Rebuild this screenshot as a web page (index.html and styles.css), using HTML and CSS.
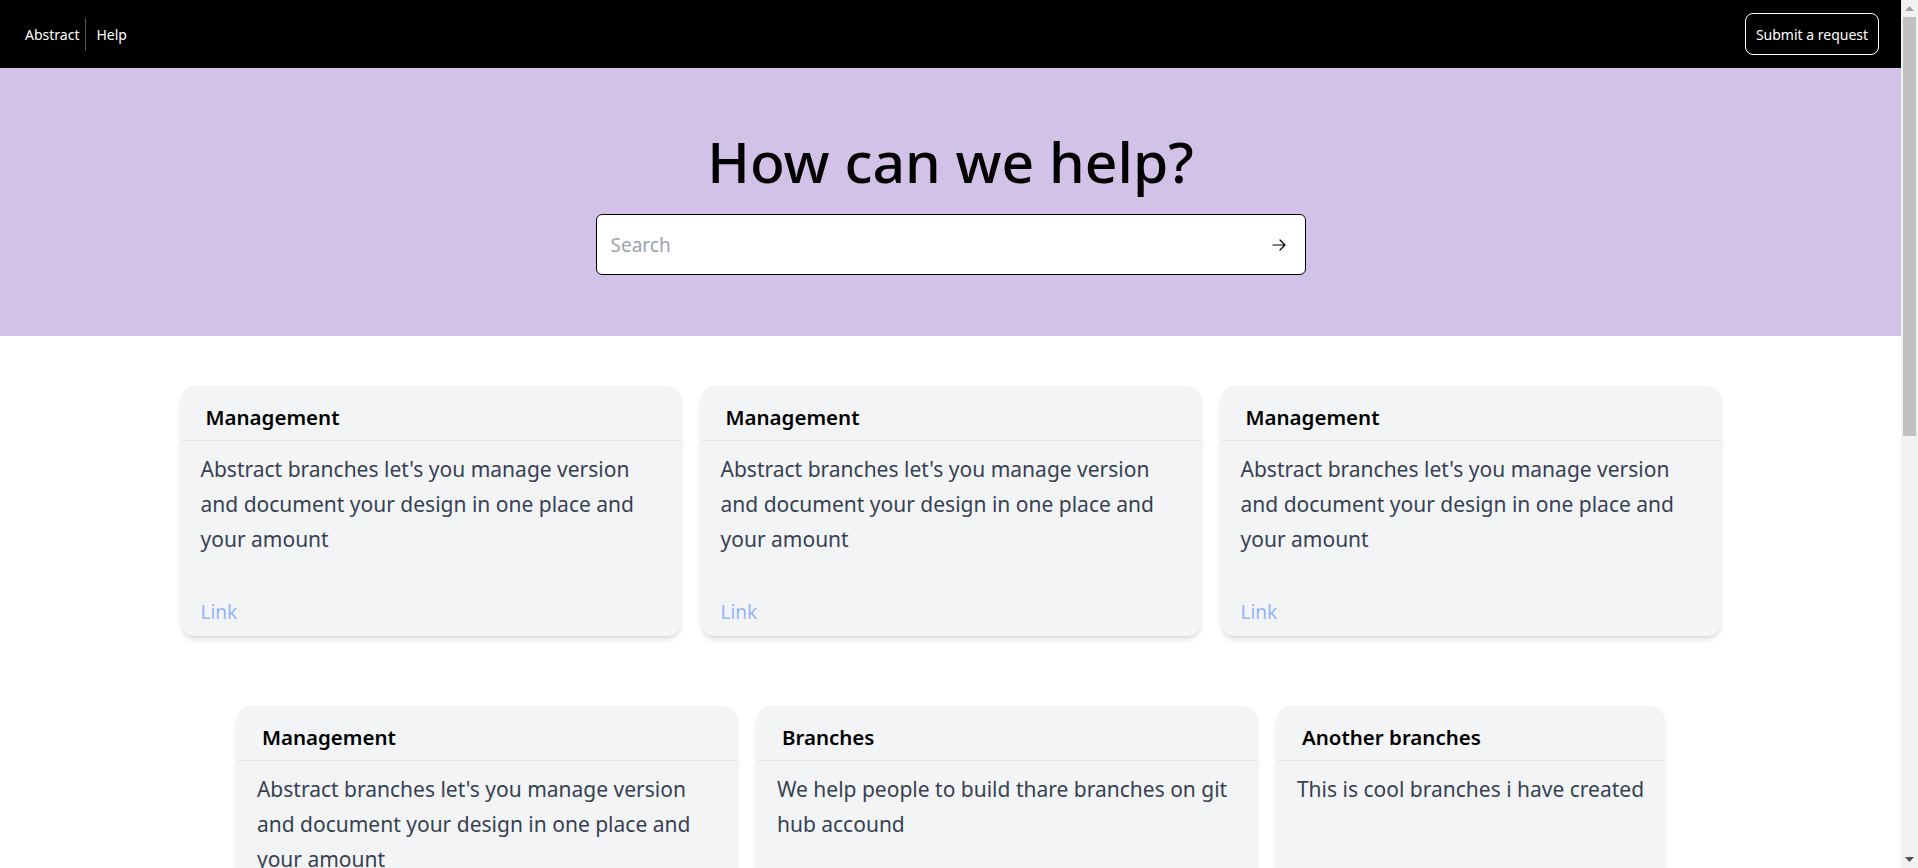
FILE: index.html
```html
<!DOCTYPE html>
<html lang="en">
<head>
<meta charset="utf-8">
<title>Abstract Help</title>
<link rel="stylesheet" href="styles.css">
</head>
<body>
<div class="page">
  <header class="nav">
    <div class="brand">
      <span class="brand-name">Abstract</span>
      <span class="brand-help">Help</span>
    </div>
    <button class="submit-btn" type="button">Submit a request</button>
  </header>

  <section class="hero">
    <h1 class="hero-title">How can we help?</h1>
    <form class="search">
      <input class="search-input" type="text" placeholder="Search">
      <button class="search-btn" type="button" aria-label="Search">
        <svg width="14" height="12" viewBox="0 0 14 12" fill="none" stroke="#000" stroke-width="1.2" stroke-linecap="round" stroke-linejoin="round"><path d="M1 6h12M8 1l5 5-5 5"/></svg>
      </button>
    </form>
  </section>

  <main class="cards">
    <div class="card-row">
      <article class="card">
        <h2 class="card-title">Management</h2>
        <p class="card-text">Abstract branches let's you manage version and document your design in one place and your amount</p>
        <a class="card-link" href="#">Link</a>
      </article>
      <article class="card">
        <h2 class="card-title">Management</h2>
        <p class="card-text">Abstract branches let's you manage version and document your design in one place and your amount</p>
        <a class="card-link" href="#">Link</a>
      </article>
      <article class="card">
        <h2 class="card-title">Management</h2>
        <p class="card-text">Abstract branches let's you manage version and document your design in one place and your amount</p>
        <a class="card-link" href="#">Link</a>
      </article>
    </div>
    <div class="card-row">
      <article class="card">
        <h2 class="card-title">Management</h2>
        <p class="card-text">Abstract branches let's you manage version and document your design in one place and your amount</p>
        <a class="card-link" href="#">Link</a>
      </article>
      <article class="card">
        <h2 class="card-title">Branches</h2>
        <p class="card-text">We help people to build thare branches on git hub accound</p>
        <a class="card-link" href="#">Link</a>
      </article>
      <article class="card">
        <h2 class="card-title">Another branches</h2>
        <p class="card-text">This is cool branches i have created</p>
        <a class="card-link" href="#">Link</a>
      </article>
    </div>
  </main>
</div>

<div class="scrollbar" aria-hidden="true">
  <div class="scroll-arrow">
    <svg width="9" height="5" viewBox="0 0 9 5"><path d="M0 5L4.5 0L9 5Z" fill="#a3a3a3"/></svg>
  </div>
  <div class="scroll-track">
    <div class="scroll-thumb"></div>
  </div>
  <div class="scroll-arrow">
    <svg width="9" height="5" viewBox="0 0 9 5"><path d="M0 0L4.5 5L9 0Z" fill="#505050"/></svg>
  </div>
</div>
</body>
</html>
```

FILE: styles.css
```css
* { box-sizing: border-box; }

html, body {
  margin: 0;
  padding: 0;
}

html {
  scrollbar-width: none;
}

html::-webkit-scrollbar {
  display: none;
}

body {
  font-family: "Noto Sans", "Open Sans", "Liberation Sans", sans-serif;
  color: #000;
  background: #fff;
}

.page {
  margin-right: 17px;
}

/* fake classic scrollbar pinned over the right edge */
.scrollbar {
  position: fixed;
  top: 0;
  right: 0;
  width: 17px;
  height: 100vh;
  background: #f1f1f1;
  display: flex;
  flex-direction: column;
}

.scroll-arrow {
  height: 17px;
  display: flex;
  align-items: center;
  justify-content: center;
  flex: none;
}

.scroll-track {
  flex: 1;
  padding: 0 2px;
}

.scroll-thumb {
  height: 419px;
  background: #c1c1c1;
}

.nav {
  height: 68px;
  background: #000;
  display: flex;
  align-items: center;
  justify-content: space-between;
  padding: 0 22px 0 25px;
}

.brand {
  display: flex;
  align-items: center;
  color: #fff;
  font-size: 14px;
}

.brand-name {
  padding-right: 6px;
}

.brand-help {
  border-left: 1px solid #4b5563;
  padding: 7px 0 7px 10px;
}

.submit-btn {
  height: 42px;
  width: 134px;
  background: #000;
  color: #fff;
  border: 1px solid #fff;
  border-radius: 8px;
  font-family: inherit;
  font-size: 14px;
  padding: 0;
}

.hero {
  background: #d3c2e7;
  padding: 57px 0 61px;
  display: flex;
  flex-direction: column;
  align-items: center;
}

.hero-title {
  margin: 0 0 17px;
  font-size: 57px;
  font-weight: 550;
  line-height: 72px;
  color: #000;
}

.search {
  width: 710px;
  height: 61px;
  background: #fff;
  border: 1px solid #000;
  border-radius: 6px;
  display: flex;
  align-items: center;
  padding: 0 19px 0 14px;
  margin: 0;
}

.search-input {
  flex: 1;
  border: none;
  outline: none;
  background: transparent;
  font-family: inherit;
  font-size: 19px;
  color: #111;
  padding: 0;
}

.search-input::placeholder {
  color: #9ca3af;
}

.search-btn {
  border: none;
  background: transparent;
  padding: 0;
  display: flex;
}

.cards {
  padding: 50px 0 770px;
  display: flex;
  flex-direction: column;
  gap: 70px;
}

.card-row {
  display: flex;
  justify-content: center;
  gap: 20px;
}

.card {
  max-width: 500px;
  background: #f3f4f6;
  border-radius: 14px;
  box-shadow: 0 4px 6px -1px rgba(0, 0, 0, 0.12), 0 2px 4px -2px rgba(0, 0, 0, 0.1);
  display: flex;
  flex-direction: column;
  padding-bottom: 10px;
}

.card-title {
  margin: 0;
  padding: 17px 25px 9px;
  font-size: 20.5px;
  font-weight: 600;
  line-height: 28px;
  border-bottom: 1px solid #e5e7eb;
  color: #000;
}

.card-text {
  margin: 0;
  padding: 11px 20px 0;
  font-size: 21px;
  line-height: 35px;
  color: #374151;
  flex: 1;
}

.card-link {
  margin-top: 41px;
  padding: 0 20px;
  font-size: 19px;
  line-height: 28px;
  color: #93b4fa;
  text-decoration: none;
}
```
